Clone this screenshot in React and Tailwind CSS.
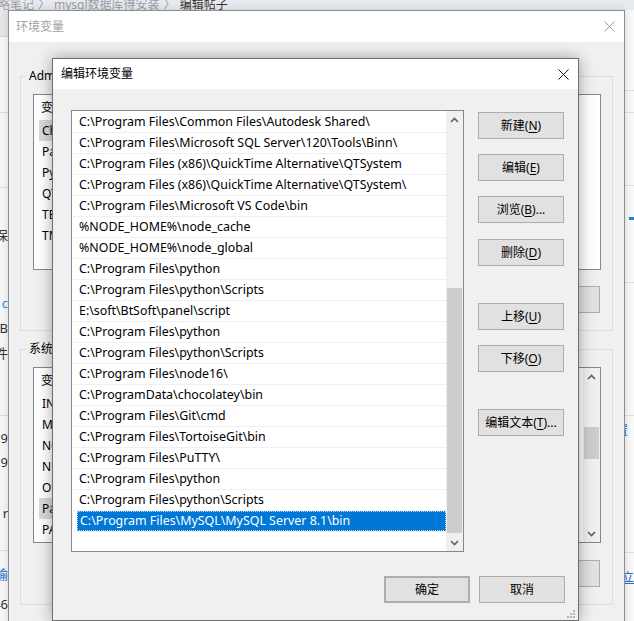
import React from 'react';

const paths = [
  'C:\\Program Files\\Common Files\\Autodesk Shared\\',
  'C:\\Program Files\\Microsoft SQL Server\\120\\Tools\\Binn\\',
  'C:\\Program Files (x86)\\QuickTime Alternative\\QTSystem',
  'C:\\Program Files (x86)\\QuickTime Alternative\\QTSystem\\',
  'C:\\Program Files\\Microsoft VS Code\\bin',
  '%NODE_HOME%\\node_cache',
  '%NODE_HOME%\\node_global',
  'C:\\Program Files\\python',
  'C:\\Program Files\\python\\Scripts',
  'E:\\soft\\BtSoft\\panel\\script',
  'C:\\Program Files\\python',
  'C:\\Program Files\\python\\Scripts',
  'C:\\Program Files\\node16\\',
  'C:\\ProgramData\\chocolatey\\bin',
  'C:\\Program Files\\Git\\cmd',
  'C:\\Program Files\\TortoiseGit\\bin',
  'C:\\Program Files\\PuTTY\\',
  'C:\\Program Files\\python',
  'C:\\Program Files\\python\\Scripts',
  'C:\\Program Files\\MySQL\\MySQL Server 8.1\\bin',
];

const userVars = [
  ['ChocolateyLastPathUpdate', '133394765512345678'],
  ['Path', 'C:\\Users\\Administrator\\AppData\\Local\\Microsoft'],
  ['PyCharm Community Edition', 'D:\\PyCharm\\bin;'],
  ['QTJAVA', 'C:\\Program Files (x86)\\Java\\jre1.8.0\\lib\\ext'],
  ['TEMP', '%USERPROFILE%\\AppData\\Local\\Temp'],
  ['TMP', '%USERPROFILE%\\AppData\\Local\\Temp'],
];

const sysVars = [
  ['INCLUDE', 'C:\\Program Files (x86)\\Windows Kits\\include'],
  ['MOZ_PLUGIN_PATH', 'C:\\Program Files (x86)\\Foxit Software'],
  ['NODE_HOME', 'C:\\Program Files\\nodejs'],
  ['NUMBER_OF_PROCESSORS', '8'],
  ['OS', 'Windows_NT'],
  ['Path', 'C:\\Program Files\\Common Files\\Autodesk Shared\\'],
  ['PATHEXT', '.COM;.EXE;.BAT;.CMD;.VBS;.VBE;.JS;.JSE'],
];

const Chevron = ({ down }) => (
  <svg width="9" height="6" viewBox="0 0 9 6" className={down ? 'rotate-180' : ''}>
    <path d="M1 5 L4.5 1.5 L8 5" fill="none" stroke="#606060" strokeWidth="1.6" />
  </svg>
);

const CloseX = ({ color }) => (
  <svg width="11" height="11" viewBox="0 0 11 11">
    <path d="M0.5 0.5 L10.5 10.5 M10.5 0.5 L0.5 10.5" stroke={color} strokeWidth="1" />
  </svg>
);

const Btn = ({ children, className = '' }) => (
  <div
    className={`flex h-[27px] w-[86px] shrink-0 items-center justify-center border border-[#adadad] bg-[#e1e1e1] text-[12px] text-black ${className}`}
  >
    {children}
  </div>
);

const Key = ({ k }) => <span className="underline underline-offset-[2px]">{k}</span>;

// a list of variables in the background window
const VarList = ({ rows, selected, scroll }) => (
  <div className="flex h-[176px] border border-[#828790] bg-white">
    <div className="flex-1 overflow-hidden">
      <div className="flex h-[25px] items-center text-[12px] text-black">
        <span className="w-[190px] pl-[7px]">变量</span>
        <span>值</span>
      </div>
      {rows.map(([k, v], i) => (
        <div
          key={i}
          className={`ml-[5px] flex h-[21px] w-[520px] items-center overflow-hidden whitespace-nowrap text-[12px] text-black ${
            i === selected ? 'bg-[#d9d9d9]' : ''
          }`}
        >
          <span className="w-[185px] shrink-0 pl-[3px]">{k}</span>
          <span>{v}</span>
        </div>
      ))}
    </div>
    {scroll && (
      <div className="flex w-[17px] flex-col bg-[#f0f0f0]">
        <div className="flex h-[17px] items-center justify-center">
          <Chevron />
        </div>
        <div className="flex-1">
          <div className="mx-[1px] mt-[42px] h-[32px] bg-[#cdcdcd]" />
        </div>
        <div className="flex h-[17px] items-center justify-center">
          <Chevron down />
        </div>
      </div>
    )}
  </div>
);

const Group = ({ label, children }) => (
  <fieldset className="border border-[#dcdcdc]">
    <legend className="ml-[5px] px-[3px] text-[12px] leading-[16px] text-black">{label}</legend>
    <div className="pb-[17px] pl-[12px] pr-[11px] pt-[10px]">{children}</div>
  </fieldset>
);

const Frag = ({ h, text, color = 'text-[#333]', line }) => (
  <div
    className={`flex items-center justify-end overflow-hidden whitespace-nowrap text-[13px] ${color} ${
      line ? 'border-b border-[#dedede]' : ''
    }`}
    style={{ height: h }}
  >
    {text}
  </div>
);

export default function App() {
  return (
    <div className='relative h-[621px] w-[634px] overflow-hidden bg-[#f5f6f7] font-["Segoe_UI","Noto_Sans","Noto_Sans_CJK_SC",sans-serif]'>
      {/* page behind the windows */}
      <div className="h-[10px] overflow-hidden bg-[#e8ebee]">
        <div className="-ml-[14px] -mt-[4px] flex items-center gap-[4px] whitespace-nowrap text-[12px] leading-[18px] text-[#9a9ea6]">
          <span>攻略笔记</span>
          <span>〉</span>
          <span>mysql数据库得安装</span>
          <span>〉</span>
          <span className="text-[#333]">编辑帖子</span>
        </div>
      </div>
      <div className="flex h-[611px]">
        <div className="w-[8px] bg-[#f7f7f7]">
          <div className="h-[27px] border-b border-[#d6d6d6] bg-[#e6e6e6]" />
          <Frag h={76} line />
          <Frag h={75} line />
          <Frag h={38} />
          <Frag h={20} text="保" />
          <Frag h={48} />
          <Frag h={20} text="c" color="text-[#2a8be0]" />
          <Frag h={5} />
          <Frag h={20} text="B" />
          <Frag h={5} />
          <Frag h={20} text="件" />
          <Frag h={52} line />
          <Frag h={13} />
          <Frag h={20} text="9" />
          <Frag h={4} />
          <Frag h={20} text="9" />
          <Frag h={31} />
          <Frag h={20} text="r" />
          <Frag h={27} line />
          <Frag h={14} />
          <Frag h={20} text="输" color="text-[#1a6fc9]" />
          <Frag h={10} />
          <Frag h={20} text="46" />
        </div>
        <div className="flex-1" />
        <div className="w-[10px] bg-[#f9f9f9]">
          <div className="h-[81px] border-b border-[#dedede]" />
          <div className="h-[22px] border-b border-[#dedede]" />
          <div className="h-[73px] border-b border-[#dedede]" />
          <div className="flex h-[34px] items-end pl-[5px]">
            <div className="h-[3px] w-[5px] bg-[#2a7fd4]" />
          </div>
          <div className="h-[63px] border-b border-[#dedede]" />
          <div className="h-[133px] border-b border-[#dedede]" />
          <div className="flex h-[30px] items-center overflow-hidden whitespace-nowrap text-[12px] text-[#1a6fc9]">
            <span className="-ml-[8px]">置</span>
          </div>
          <div className="h-[107px] border-b border-[#dedede]" />
          <div className="flex h-[50px] items-center overflow-hidden whitespace-nowrap text-[12px] text-[#1a6fc9]">
            <span className="-ml-[2px] underline">立</span>
          </div>
        </div>
      </div>

      {/* 环境变量 window */}
      <div className="absolute left-[8px] top-[10px] h-[640px] w-[617px] border border-[#8e8e8e] bg-[#f0f0f0] shadow-[0_0_8px_rgba(0,0,0,0.15)]">
        <div className="flex h-[31px] items-center justify-between bg-white pl-[7px] pr-[9px]">
          <span className="text-[12px] text-[#a3a3a3]">环境变量</span>
          <CloseX color="#9a9a9a" />
        </div>
        <div className="px-[11px] pt-[26px]">
          <Group label="Administrator 的用户变量(U)">
            <VarList rows={userVars} selected={0} />
            <div className="mt-[16px] flex justify-end gap-[9px] pr-[1px]">
              <Btn>新建(N)...</Btn>
              <Btn>编辑(E)...</Btn>
              <Btn>删除(D)</Btn>
            </div>
          </Group>
          <div className="h-[10px]" />
          <Group label="系统变量(S)">
            <VarList rows={sysVars} selected={5} scroll />
            <div className="mt-[17px] flex justify-end gap-[9px] pr-[1px]">
              <Btn>新建(W)...</Btn>
              <Btn>编辑(I)...</Btn>
              <Btn>删除(L)</Btn>
            </div>
          </Group>
        </div>
      </div>

      {/* 编辑环境变量 dialog */}
      <div className="absolute left-[52px] top-[58px] h-[563px] w-[527px] border border-[#6f6f6f] bg-[#f0f0f0] shadow-[0_0_14px_rgba(0,0,0,0.35)]">
        <div className="flex h-[30px] items-center justify-between bg-white pl-[8px] pr-[9px]">
          <span className="text-[12px] text-black">编辑环境变量</span>
          <CloseX color="#111" />
        </div>
        <div className="pl-[18px] pr-[13px] pt-[21px]">
          <div className="flex">
            <div className="flex h-[442px] w-[393px] border border-[#828790] bg-white">
              <div className="flex-1 pt-[1px]">
                {paths.map((p, i) => {
                  const sel = i === paths.length - 1;
                  return (
                    <div key={i} className="ml-[1px] h-[21px] border-b border-[#f0f0f0]">
                      <div
                        className={`ml-[4px] flex h-[20px] items-center whitespace-nowrap pl-[2px] pt-[1px] text-[12.4px] ${
                          sel ? 'border border-dotted border-[#b9d8f3] bg-[#0078d7] pl-[1px] text-white' : 'text-black'
                        }`}
                      >
                        {p}
                      </div>
                    </div>
                  );
                })}
              </div>
              <div className="flex w-[17px] flex-col bg-[#f0f0f0]">
                <div className="flex h-[17px] items-center justify-center">
                  <Chevron />
                </div>
                <div className="flex-1">
                  <div className="mx-[1px] mt-[160px] h-[245px] bg-[#cdcdcd]" />
                </div>
                <div className="flex h-[17px] items-center justify-center">
                  <Chevron down />
                </div>
              </div>
            </div>
            <div className="ml-[14px] flex flex-col pt-[2px]">
              <Btn>新建(<Key k="N" />)</Btn>
              <Btn className="mt-[15px]">编辑(<Key k="E" />)</Btn>
              <Btn className="mt-[15px]">浏览(<Key k="B" />)...</Btn>
              <Btn className="mt-[16px]">删除(<Key k="D" />)</Btn>
              <Btn className="mt-[37px]">上移(<Key k="U" />)</Btn>
              <Btn className="mt-[15px]">下移(<Key k="O" />)</Btn>
              <Btn className="mt-[37px]">编辑文本(<Key k="T" />)...</Btn>
            </div>
          </div>
          <div className="mt-[24px] flex justify-end gap-[9px]">
            <Btn className="border-2 border-[#0078d7]">确定</Btn>
            <Btn>取消</Btn>
          </div>
        </div>
        {/* resize grip */}
        <div className="absolute bottom-[2px] right-[3px] grid grid-cols-3 gap-[1px]">
          <span className="h-[2px] w-[2px]" />
          <span className="h-[2px] w-[2px]" />
          <span className="h-[2px] w-[2px] bg-[#b5b5b5]" />
          <span className="h-[2px] w-[2px]" />
          <span className="h-[2px] w-[2px] bg-[#b5b5b5]" />
          <span className="h-[2px] w-[2px] bg-[#b5b5b5]" />
          <span className="h-[2px] w-[2px] bg-[#b5b5b5]" />
          <span className="h-[2px] w-[2px] bg-[#b5b5b5]" />
          <span className="h-[2px] w-[2px] bg-[#b5b5b5]" />
        </div>
      </div>
    </div>
  );
}
